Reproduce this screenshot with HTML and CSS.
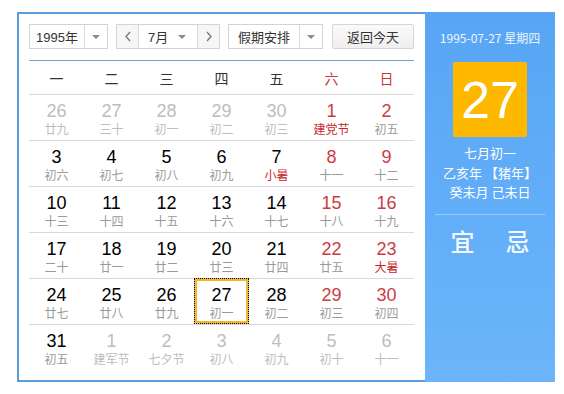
FILE: index.html
```html
<!DOCTYPE html>
<html lang="zh-CN">
<head>
    <meta charset="UTF-8">
    <title>万年历</title>
    <link rel="stylesheet" href="styles.css">
</head>
<body>
    <div class="calendar">
        <div class="main">
            <div class="toolbar">
                <div class="select year-select">
                    <span class="select-text">1995年</span>
                    <span class="select-arrow"><i class="caret"></i></span>
                </div>
                <div class="month-group">
                    <span class="nav-btn">
                        <svg width="8" height="11" viewBox="0 0 8 11"><path d="M6 1 L2 5.5 L6 10" fill="none" stroke="#777" stroke-width="1.3"/></svg>
                    </span>
                    <span class="month-text">7月 <i class="caret"></i></span>
                    <span class="nav-btn">
                        <svg width="8" height="11" viewBox="0 0 8 11"><path d="M2 1 L6 5.5 L2 10" fill="none" stroke="#777" stroke-width="1.3"/></svg>
                    </span>
                </div>
                <div class="select holiday-select">
                    <span class="select-text">假期安排</span>
                    <span class="select-arrow"><i class="caret"></i></span>
                </div>
                <button class="today-btn">返回今天</button>
            </div>

            <div class="weekdays">
                <span>一</span><span>二</span><span>三</span><span>四</span><span>五</span>
                <span class="weekend">六</span><span class="weekend">日</span>
            </div>

            <div class="days" id="days"></div>
        </div>

        <div class="side">
            <div class="side-date">1995-07-27 星期四</div>
            <div class="big-day">27</div>
            <div class="lunar-info">
                <div>七月初一</div>
                <div>乙亥年 【猪年】</div>
                <div>癸未月 己未日</div>
            </div>
            <div class="side-line"></div>
            <div class="yi-ji">
                <span>宜</span><span>忌</span>
            </div>
        </div>
    </div>

    <script>
        // Данные месяца: [число, лунный день, флаги]
        // o - другой месяц, w - выходной, h - праздник, t - сегодня
        const rows = [
            [[26,'廿九','o'],[27,'三十','o'],[28,'初一','o'],[29,'初二','o'],[30,'初三','o'],[1,'建党节','wh'],[2,'初五','w']],
            [[3,'初六',''],[4,'初七',''],[5,'初八',''],[6,'初九',''],[7,'小暑','h'],[8,'十一','w'],[9,'十二','w']],
            [[10,'十三',''],[11,'十四',''],[12,'十五',''],[13,'十六',''],[14,'十七',''],[15,'十八','w'],[16,'十九','w']],
            [[17,'二十',''],[18,'廿一',''],[19,'廿二',''],[20,'廿三',''],[21,'廿四',''],[22,'廿五','w'],[23,'大暑','wh']],
            [[24,'廿七',''],[25,'廿八',''],[26,'廿九',''],[27,'初一','t'],[28,'初二',''],[29,'初三','w'],[30,'初四','w']],
            [[31,'初五',''],[1,'建军节','o'],[2,'七夕节','o'],[3,'初八','o'],[4,'初九','o'],[5,'初十','o'],[6,'十一','o']]
        ];

        const daysEl = document.getElementById('days');
        rows.forEach(row => {
            const rowEl = document.createElement('div');
            rowEl.className = 'week';
            row.forEach(([num, lunar, flags]) => {
                const cell = document.createElement('div');
                cell.className = 'day';
                if (flags.includes('o')) cell.classList.add('other');
                if (flags.includes('w')) cell.classList.add('weekend');
                if (flags.includes('h')) cell.classList.add('holiday');
                if (flags.includes('t')) cell.classList.add('today');
                cell.innerHTML = `<span class="num">${num}</span><span class="lunar">${lunar}</span>`;
                rowEl.appendChild(cell);
            });
            daysEl.appendChild(rowEl);
        });
    </script>
</body>
</html>
```

FILE: styles.css
```css
body {
    margin: 0;
    background-color: #fff;
    font-family: "Liberation Sans", "Noto Sans CJK SC", sans-serif;
}
.calendar {
    display: flex;
    width: 536px;
    height: 366px;
    margin: 12px 0 0 17px;
    border: 2px solid #5b9ddb;
    border-right: none;
}
.main {
    width: 385px;
    padding: 10px 11px 0 10px;
    background-color: #fff;
}
.toolbar {
    display: flex;
    height: 25px;
    padding-bottom: 11px;
    border-bottom: 1px solid #6da6dc;
}
.select,
.month-group {
    display: flex;
    box-sizing: border-box;
    height: 25px;
    border: 1px solid #d3d3d3;
    background-color: #fff;
    font-size: 13px;
    color: #333;
}
.select-text {
    display: flex;
    align-items: center;
    justify-content: center;
    border-right: 1px solid #dcdcdc;
}
.select-arrow {
    display: flex;
    align-items: center;
    justify-content: center;
    flex: 1;
}
.caret {
    display: inline-block;
    width: 0;
    height: 0;
    border-left: 4px solid transparent;
    border-right: 4px solid transparent;
    border-top: 4px solid #8a8a8a;
}
.year-select {
    width: 79px;
}
.year-select .select-text {
    width: 54px;
}
.month-group {
    width: 104px;
    margin-left: 8px;
}
.nav-btn {
    display: flex;
    align-items: center;
    justify-content: center;
    width: 21px;
    background-color: #f6f6f6;
}
.nav-btn:first-child {
    border-right: 1px solid #dcdcdc;
}
.nav-btn:last-child {
    border-left: 1px solid #dcdcdc;
}
.month-text {
    display: flex;
    align-items: center;
    justify-content: space-between;
    flex: 1;
    padding: 0 11px 0 9px;
}
.holiday-select {
    width: 95px;
    margin-left: 8px;
}
.holiday-select .select-text {
    width: 70px;
}
.today-btn {
    width: 82px;
    height: 25px;
    margin-left: 9px;
    padding: 0;
    border: 1px solid #d6d6d6;
    border-radius: 2px;
    background: linear-gradient(#fafafa, #efefef);
    font-family: inherit;
    font-size: 13px;
    color: #333;
}
.weekdays {
    display: grid;
    grid-template-columns: repeat(7, 55px);
    height: 33px;
    border-bottom: 1px solid #d9d9d9;
    font-family: "Noto Sans CJK SC", sans-serif;
    font-size: 14px;
    color: #333;
}
.weekdays span {
    display: flex;
    align-items: center;
    justify-content: center;
}
.weekdays .weekend {
    color: #c8353a;
}
.week {
    display: grid;
    grid-template-columns: repeat(7, 55px);
    height: 45px;
    border-bottom: 1px solid #d9d9d9;
}
.week:last-child {
    border-bottom: none;
}
.day {
    display: flex;
    flex-direction: column;
    align-items: center;
    padding-top: 6px;
}
.num {
    font-size: 18px;
    line-height: 20px;
    color: #000;
}
.lunar {
    font-family: "Noto Sans CJK SC", sans-serif;
    font-size: 12px;
    line-height: 16px;
    color: #9a9a9a;
}
.day.weekend .num {
    color: #cd3b3f;
}
.day.holiday .lunar {
    color: #c8282d;
}
.day.other .num,
.day.other .lunar {
    color: #bdbdbd;
}
.day.today {
    margin-top: -1px;
    height: 46px;
    box-sizing: border-box;
    padding-top: 7px;
    box-shadow: inset 0 0 0 3px #f3b833;
    outline: 1px dotted #000;
    outline-offset: -1px;
}
.side {
    display: flex;
    flex-direction: column;
    align-items: center;
    width: 130px;
    margin: -2px 0;
    background: linear-gradient(#57a5f4, #6cb5fb);
    color: #fff;
    font-family: "Noto Sans CJK SC", sans-serif;
}
.side-date {
    margin-top: 18px;
    font-size: 12px;
    line-height: 16px;
    color: #eef6ff;
}
.big-day {
    display: flex;
    align-items: center;
    justify-content: center;
    width: 74px;
    height: 75px;
    margin-top: 16px;
    border-radius: 2px;
    background-color: #ffb800;
    font-family: "Liberation Sans", sans-serif;
    font-size: 52px;
}
.lunar-info {
    margin-top: 6px;
    font-size: 13px;
    line-height: 19.5px;
    text-align: center;
}
.side-line {
    width: 110px;
    height: 1px;
    margin-top: 12px;
    background-color: #9dcbf7;
}
.yi-ji {
    display: flex;
    gap: 31px;
    margin-top: 13px;
    font-size: 24px;
    line-height: 26px;
    font-weight: 500;
    color: #f4f9ff;
}
```
